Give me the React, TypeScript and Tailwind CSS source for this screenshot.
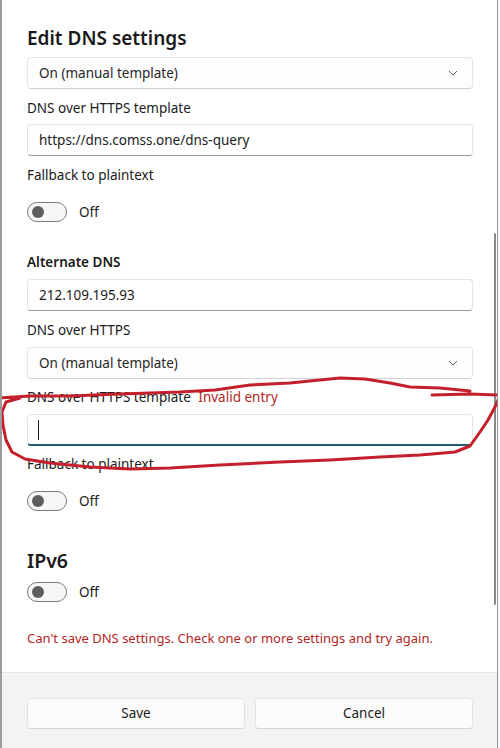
import React from "react";

const font = { fontFamily: '"Noto Sans", "Open Sans", Arial, sans-serif' };

function Chevron() {
  return (
    <svg width="10" height="6" viewBox="0 0 10 6" className="text-[#5c5c5c]">
      <path d="M1 1 L5 5 L9 1" fill="none" stroke="currentColor" strokeWidth="1" />
    </svg>
  );
}

function Select({ value, className = "" }: { value: string; className?: string }) {
  return (
    <div
      className={`flex h-[32px] items-center justify-between rounded-[4px] border border-[#e5e5e5] border-b-[#d0d0d0] bg-[#fdfdfd] pl-[11px] pr-[14px] ${className}`}
    >
      <span className="text-[13.5px] text-[#262626]">{value}</span>
      <Chevron />
    </div>
  );
}

function TextBox({ value, className = "" }: { value: string; className?: string }) {
  return (
    <div
      className={`flex h-[32px] items-center rounded-[4px] border border-[#e5e5e5] border-b-[#9a9a9a] bg-white pl-[11px] ${className}`}
    >
      <span className="text-[13.5px] text-[#1b1b1b]">{value}</span>
    </div>
  );
}

function Label({ children, className = "" }: { children: React.ReactNode; className?: string }) {
  return <div className={`h-[20px] text-[13.5px] leading-[20px] text-[#1b1b1b] ${className}`}>{children}</div>;
}

function Toggle({ className = "" }: { className?: string }) {
  return (
    <div className={`flex h-[20px] items-center gap-[12px] ${className}`}>
      <div className="flex h-[20px] w-[40px] items-center rounded-full border border-[#7a7a7a] bg-[#f6f6f6] pl-[4px]">
        <div className="h-[12px] w-[12px] rounded-full bg-[#5d5d5d]" />
      </div>
      <span className="text-[13.5px] text-[#1b1b1b]">Off</span>
    </div>
  );
}

export default function App() {
  return (
    <div className="flex h-[748px] w-[500px] overflow-hidden bg-white" style={font}>
      <div className="w-[2px] bg-[#9c9c9c]" />
      <div className="relative flex w-[496px] flex-col overflow-hidden rounded-tl-[8px] border-r border-[#8f8f8f] bg-white">
        {/* header */}
        <div className="h-[55px] px-[25px] pt-[24px] text-[19px] font-semibold leading-[28px] text-[#1a1a1a]">
          Edit DNS settings
        </div>

        {/* scroll area */}
        <div className="relative flex-1 pl-[25px] pr-[24px]">
          <Select value="On (manual template)" className="mt-[2px]" />
          <Label className="mt-[9px]">DNS over HTTPS template</Label>
          <TextBox value="https://dns.comss.one/dns-query" className="mt-[6px]" />
          <Label className="mt-[9px]">Fallback to plaintext</Label>
          <Toggle className="mt-[17px]" />

          <Label className="mt-[30px] font-semibold">Alternate DNS</Label>
          <TextBox value="212.109.195.93" className="mt-[7px]" />
          <Label className="mt-[9px]">DNS over HTTPS</Label>
          <Select value="On (manual template)" className="mt-[7px]" />
          <Label className="mt-[8px]">
            DNS over HTTPS template <span className="ml-[4px] text-[#b3261e]">Invalid entry</span>
          </Label>
          <div className="mt-[7px] flex h-[32px] items-center rounded-[4px] border border-[#e5e5e5] border-b-2 border-b-[#1f5c6c] bg-white pl-[10px]">
            <div className="h-[20px] w-[1px] bg-[#1a1a1a]" />
          </div>
          <Label className="mt-[8px]">Fallback to plaintext</Label>
          <Toggle className="mt-[17px]" />

          <div className="mt-[36px] h-[28px] text-[19.5px] font-semibold leading-[28px] text-[#1a1a1a]">IPv6</div>
          <Toggle className="mt-[7px]" />

          <div className="mt-[26px] text-[13px] leading-[20px] text-[#b3261e]">
            Can't save DNS settings. Check one or more settings and try again.
          </div>

          {/* scrollbar */}
          <div className="absolute right-[1px] top-[178px] h-[372px] w-[2px] rounded-full bg-[#8a8a8a]" />
        </div>

        {/* footer */}
        <div className="flex h-[76px] gap-[10px] border-t border-[#e5e5e5] bg-[#f3f3f3] pl-[25px] pr-[24px] pt-[25px]">
          <button className="h-[31px] flex-1 rounded-[4px] border border-[#e5e5e5] border-b-[#d4d4d4] bg-[#fbfbfb] text-[13.5px] text-[#1b1b1b]">
            Save
          </button>
          <button className="h-[31px] flex-1 rounded-[4px] border border-[#e5e5e5] border-b-[#d4d4d4] bg-[#fbfbfb] text-[13.5px] text-[#1b1b1b]">
            Cancel
          </button>
        </div>

        {/* hand-drawn red annotation */}
        <svg className="pointer-events-none absolute left-[-2px] top-0" width="500" height="748" viewBox="0 0 500 748">
          <path
            d="M0 398 L30 396 L70 396 L120 394 L180 392 L215 390 L250 385 L290 383 L320 380 L340 378 L365 379 L390 383 L410 387 L440 388 L470 391
               M432 395 L470 394 L500 395 L496 405 L488 420 L480 432 L470 446 L455 452 L420 455 L380 457 L330 460 L280 462 L220 465 L170 468 L130 469 L90 467 L50 463 L25 459 L12 452 L6 440 L3 425 L2 412 L6 402 L20 398"
            fill="none"
            stroke="#c4202b"
            strokeWidth="3"
            strokeLinejoin="round"
            strokeLinecap="round"
          />
        </svg>
      </div>
    </div>
  );
}
